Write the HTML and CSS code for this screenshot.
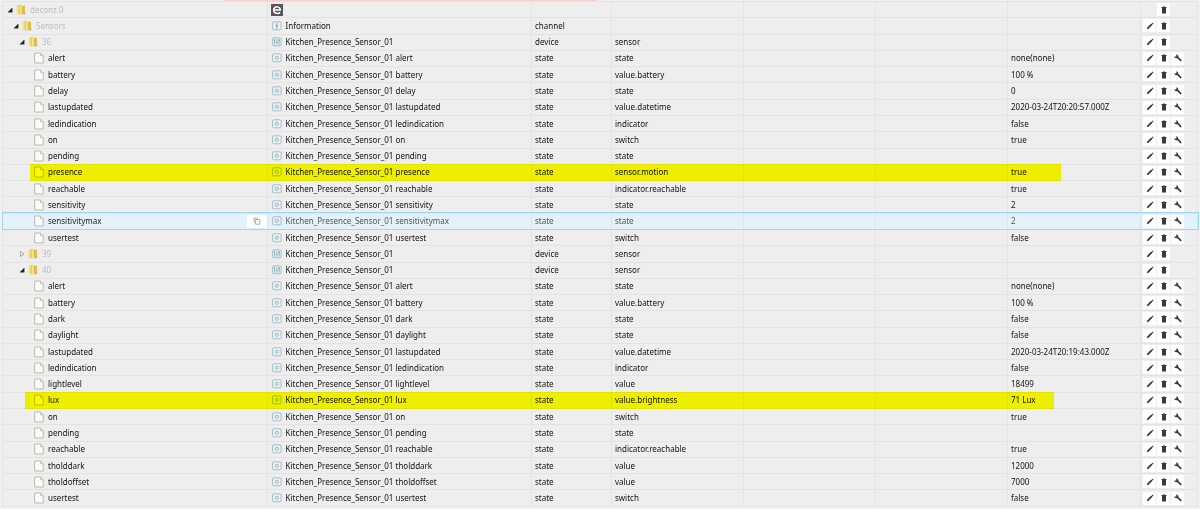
FILE: index.html
```html
<!DOCTYPE html>
<html lang="en">
<head>
<meta charset="utf-8">
<title>Objects</title>
<link rel="stylesheet" href="styles.css">
</head>
<body>
<svg class="sprite" aria-hidden="true">
  <defs>
    <linearGradient id="gold" x1="0" x2="1" y1="0" y2="0">
      <stop offset="0" stop-color="#f7e596"/><stop offset="0.5" stop-color="#efd66c"/><stop offset="1" stop-color="#d9b843"/>
    </linearGradient>
  </defs>
  <symbol id="open" viewBox="0 0 8 8"><path d="M6.200 2v4.200H2z" fill="#222" stroke="#222" stroke-width=".4"/></symbol>
  <symbol id="closed" viewBox="0 0 8 8"><path d="M2.500 1.500L6 4 2.500 6.500z" fill="#f4f4f4" stroke="#a0a0a0" stroke-width=".9"/></symbol>
  <symbol id="folder" viewBox="0 0 10 12"><path d="M.5 1.500L5 .8v9.900L.5 9.800z" fill="url(#gold)"/><path d="M5 2l4-.6v8.300L5 10.500z" fill="#dfc04f"/><path d="M4.200 1.500L5.500 2v9l-1.300-.8z" fill="#fbf0b4"/><path d="M7 8.500h2.300v1.800H7z" fill="#cdb565"/></symbol>
  <symbol id="file" viewBox="0 0 10 12"><path d="M.7 1h5.800l2.700 2.700V11H.7z" fill="#fbfbf8" stroke="#b3b3ad" stroke-width=".9"/><path d="M6.500 1v2.700h2.700" fill="#e9e9e4" stroke="#b3b3ad" stroke-width=".7"/></symbol>
  <symbol id="state" viewBox="0 0 10 10"><rect x=".6" y=".8" width="8.500" height="8" rx="1" fill="#e9f0f2" stroke="#9dbac5" stroke-width=".9"/><circle cx="4.850" cy="4.800" r="1.500" fill="none" stroke="#8fafbc" stroke-width=".9"/></symbol>
  <symbol id="channel" viewBox="0 0 10 10"><rect x=".6" y=".8" width="8.500" height="8" rx="1" fill="#e9f2f5" stroke="#9dbac5" stroke-width=".9"/><path d="M4.850 2v5.600M3.700 4.800H6" stroke="#7699a8" stroke-width=".9"/></symbol>
  <symbol id="device" viewBox="0 0 10 10"><rect x=".6" y=".8" width="8.500" height="8" rx="1" fill="#e6eff2" stroke="#9dbac5" stroke-width=".9"/><path d="M2.500 2v5.600M4.850 2v5.600M7.200 2v5.600" stroke="#7f9eab" stroke-width=".7"/><path d="M2 3.200h1M4.350 5.400h1M6.700 3.200h1" stroke="#5f8190" stroke-width=".9"/></symbol>
  <symbol id="brand" viewBox="0 0 12 12"><path d="M0 0h12v12H0z" fill="#55565a"/><path d="M0 0h3L0 3z" fill="#e3262e"/><path d="M3 6.100h6.300C9.300 1.900 2.700 1.700 2.700 6.100c0 3.800 4.500 4 6.300 2.300" fill="none" stroke="#fff" stroke-width="1.500"/></symbol>
  <symbol id="copy" viewBox="0 0 8 8"><path d="M1 5.300V1h4M2.500 2.500h4.300v4.700H2.500z" fill="none" stroke="#999" stroke-width=".8"/></symbol>
  <symbol id="edit" viewBox="0 0 8 8"><path d="M.8 7.300l.5-1.900L5.300 1.600l1.200 1.200-4 3.900zM5.800 1.200l.6-.6 1.200 1.200-.6.600z" fill="#333"/></symbol>
  <symbol id="trash" viewBox="0 0 8 8"><path d="M1.500 1H3V.6h2V1h1.500v1h-5zM2 2h4v5.500H2z" fill="#3a3a3a"/></symbol>
  <symbol id="wrench" viewBox="0 0 8 8"><path d="M.3 2.200l1.500.5.8-.8L2 .6C3.500.2 4.700 1.400 4.200 2.800L7.700 6.300 6.700 7.500 3.100 4C1.700 4.600.2 3.600.3 2.200z" fill="#333"/></symbol>
</svg>
<main class="browser">
  <div class="notice"></div>
  <table class="objects">
    <colgroup>
      <col><col><col class="type"><col class="role"><col class="room"><col class="function"><col class="value"><col class="tools">
    </colgroup>
    <tbody id="rows"></tbody>
  </table>
</main>
<script src="tree.js"></script>
</body>
</html>
```

FILE: styles.css
```css
* {
  box-sizing: border-box;
}

body {
  margin: 0;
  background: #f1f1f1;
  color: #111;
  font-family: "Noto Sans", "Open Sans", sans-serif;
  font-size: 8px;
  line-height: 14px;
}

.sprite {
  position: absolute;
  width: 0;
  height: 0;
}

.browser {
  display: flex;
  flex-direction: column;
  height: 100vh;
  padding: 0 2px 2px;
}

.notice {
  flex: none;
  width: 374px;
  height: 1px;
  margin-left: 221px;
  background: #f9cdc9;
}

.objects {
  flex: 1;
  width: 100%;
  table-layout: fixed;
  border-collapse: collapse;
  background: #eee;
}

.type { width: 80px; }
.role, .room, .function { width: 132px; }
.value { width: 133px; }
.tools { width: 57px; }

.objects tr {
  position: relative;
}

.objects td {
  height: 16px;
  padding: 0 3px;
  border: 1px solid #e3e3e3;
  white-space: nowrap;
  vertical-align: middle;
}

.cell {
  display: flex;
  align-items: center;
  gap: 4px;
  height: 14px;
}

.node {
  padding-left: calc(var(--level) * 6px);
}

.branch {
  color: #bdbdbd;
}

.arrow {
  width: 8px;
  height: 8px;
  margin-right: -2px;
}

.glyph {
  width: 10px;
  height: 12px;
}

.kind {
  width: 10px;
  height: 10px;
  margin-left: 1px;
}

.brand {
  width: 12px;
  height: 12px;
}

button {
  display: grid;
  place-items: center;
  padding: 0;
  border: 0;
  background: #fff;
}

button svg {
  width: 8px;
  height: 8px;
}

.actions {
  display: grid;
  grid-template-columns: repeat(3, 13px);
  gap: 1px;
  margin-left: -1px;
}

.actions button {
  height: 13px;
}

.remove {
  grid-column: 2;
}

.copy {
  width: 20px;
  height: 13px;
  margin-left: auto;
  margin-right: -3px;
}

.objects .selected {
  background: #e3f2fa;
  color: #555;
  outline: 1px solid #a5d5ee;
}

.selected .node {
  color: #222;
}

.marker {
  position: absolute;
  inset: 0 137px 0 27px;
  background: #ff0;
  mix-blend-mode: multiply;
  pointer-events: none;
}

.marker.wide {
  inset: 0 144px 0 22px;
}
```

FILE: tree.js
```js
const sensor = 'Kitchen_Presence_Sensor_01';
const state = (name, role, value, extra) => ({ level: 3, name, title: `${sensor} ${name}`, type: 'state', role, value, ...extra });
const device = (name, closed) => ({ level: 2, name, title: sensor, type: 'device', role: 'sensor', closed });

const objects = [
  { level: 0, name: 'deconz.0' },
  { level: 1, name: 'Sensors', title: 'Information', type: 'channel' },
  device('36'),
  state('alert', 'state', 'none(none)'),
  state('battery', 'value.battery', '100 %'),
  state('delay', 'state', '0'),
  state('lastupdated', 'value.datetime', '2020-03-24T20:20:57.000Z'),
  state('ledindication', 'indicator', 'false'),
  state('on', 'switch', 'true'),
  state('pending', 'state', ''),
  state('presence', 'sensor.motion', 'true', { marker: 'marker' }),
  state('reachable', 'indicator.reachable', 'true'),
  state('sensitivity', 'state', '2'),
  state('sensitivitymax', 'state', '2', { selected: true }),
  state('usertest', 'switch', 'false'),
  device('39', true),
  device('40'),
  state('alert', 'state', 'none(none)'),
  state('battery', 'value.battery', '100 %'),
  state('dark', 'state', 'false'),
  state('daylight', 'state', 'false'),
  state('lastupdated', 'value.datetime', '2020-03-24T20:19:43.000Z'),
  state('ledindication', 'indicator', 'false'),
  state('lightlevel', 'value', '18499'),
  state('lux', 'value.brightness', '71 Lux', { marker: 'marker wide' }),
  state('on', 'switch', 'true'),
  state('pending', 'state', ''),
  state('reachable', 'indicator.reachable', 'true'),
  state('tholddark', 'value', '12000'),
  state('tholdoffset', 'value', '7000'),
  state('usertest', 'switch', 'false')
];

const icon = (id, cls = '') => `<svg class="${cls}" aria-hidden="true"><use href="#${id}"/></svg>`;
const button = (id, cls, label) => `<button type="button" class="${cls}" aria-label="${label}">${icon(id)}</button>`;

function row(o) {
  const leaf = o.type === 'state';
  const arrow = leaf ? '<span class="arrow"></span>' : icon(o.closed ? 'closed' : 'open', 'arrow');
  const kind = o.type ? icon(o.type, 'kind') : icon('brand', 'brand');
  return `<tr class="${o.selected ? 'selected' : ''}">
    <td><div class="cell node ${leaf ? '' : 'branch'}" style="--level:${o.level}">${arrow}${icon(leaf ? 'file' : 'folder', 'glyph')}<span>${o.name}</span>${o.selected ? button('copy', 'copy', 'Copy') : ''}</div>${o.marker ? `<span class="${o.marker}"></span>` : ''}</td>
    <td><div class="cell">${kind}<span>${o.title || ''}</span></div></td>
    <td>${o.type || ''}</td><td>${o.role || ''}</td><td></td><td></td><td>${o.value || ''}</td>
    <td><div class="actions">${o.type ? button('edit', 'edit', 'Edit') : ''}${button('trash', 'remove', 'Delete')}${leaf ? button('wrench', 'configure', 'Configure') : ''}</div></td>
  </tr>`;
}

document.getElementById('rows').innerHTML = objects.map(row).join('');
```
